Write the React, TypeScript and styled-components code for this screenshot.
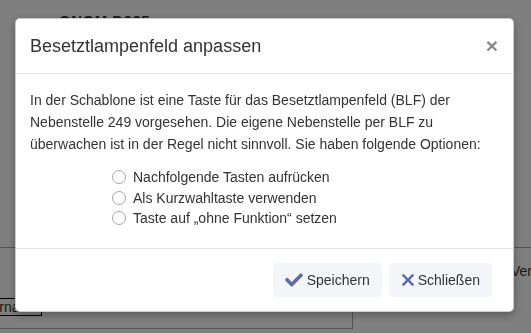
import React from "react";
import styled, { createGlobalStyle } from "styled-components";
import { FaCheck } from "react-icons/fa";

const GlobalStyle = createGlobalStyle`
  html, body { margin: 0; padding: 0; background: #fff; }
  body {
    font-family: "Liberation Sans", Arial, Helvetica, sans-serif;
    font-size: 14px;
    color: #333;
    width: 531px;
    height: 333px;
    overflow: hidden;
  }
  * { box-sizing: border-box; }
`;

const Page = styled.div`
  width: 531px;
  height: 333px;
  display: flex;
  flex-direction: column;
`;

const PageHeading = styled.div`
  padding: 12px 0 0 59px;
  height: 248px;
  font-weight: bold;
  font-size: 15px;
  letter-spacing: 0.5px;
  border-bottom: 1px solid #aaa;
`;

const PageLower = styled.div`
  display: flex;
  height: 81px;
`;

const LeftPanel = styled.div`
  width: 353px;
  border-right: 1px solid #aaa;
  border-bottom: 1px solid #aaa;
  padding-top: 50px;
`;

const NameBox = styled.div`
  width: 42px;
  height: 18px;
  border: 1px solid #000;
  border-left: none;
  font-size: 14px;
  line-height: 16px;
  overflow: hidden;
  direction: rtl;
  padding-right: 2px;
`;

const RightPanel = styled.div`
  flex: 1;
  padding: 15px 0 0 158px;
  white-space: nowrap;
  overflow: hidden;
`;

const Backdrop = styled.div`
  position: fixed;
  inset: 0;
  background: rgba(0, 0, 0, 0.5);
`;

const Modal = styled.div`
  position: fixed;
  left: 15px;
  top: 18px;
  width: 499px;
  background: #fff;
  border: 1px solid rgba(0, 0, 0, 0.2);
  border-radius: 5px;
  box-shadow: 0 3px 9px rgba(0, 0, 0, 0.3);
  display: flex;
  flex-direction: column;
`;

const Header = styled.div`
  display: flex;
  align-items: center;
  justify-content: space-between;
  padding: 14px 15px 14px 14px;
  height: 55px;
  border-bottom: 1px solid #e5e5e5;
`;

const Title = styled.h4`
  margin: 0;
  font-size: 18px;
  font-weight: normal;
  line-height: 26px;
  color: #333;
`;

const Close = styled.button`
  border: none;
  background: none;
  padding: 0;
  font-family: "Liberation Sans", Arial, sans-serif;
  font-size: 21px;
  font-weight: bold;
  line-height: 1;
  color: #8a8a8a;
  cursor: pointer;
  margin-top: -2px;
`;

const Body = styled.div`
  padding: 15px 14px 19.5px 14px;
  border-bottom: 1px solid #e5e5e5;
`;

const Text = styled.p`
  margin: 0 0 12px 0;
  line-height: 22px;
`;

const OptionList = styled.div`
  display: flex;
  flex-direction: column;
  padding-left: 82px;
`;

const OptionRow = styled.label`
  display: flex;
  align-items: center;
  height: 20.6px;
  gap: 7px;
`;

const RadioCircle = styled.span`
  width: 14px;
  height: 14px;
  border-radius: 50%;
  border: 1px solid #a8a8a8;
  background: #fff;
  flex: none;
`;

const Footer = styled.div`
  display: flex;
  justify-content: flex-end;
  gap: 7px;
  padding: 14px 21px 14px 15px;
`;

const Button = styled.button<{ $gap: number }>`
  display: flex;
  align-items: center;
  gap: ${(p) => p.$gap}px;
  height: 34px;
  padding: 0 12px 0 12px;
  border: none;
  border-radius: 4px;
  background: #f4f5f8;
  font-family: "Liberation Sans", Arial, sans-serif;
  font-size: 14px;
  color: #333;
  svg { color: #5e6ea1; flex: none; }
`;

const TimesIcon = () => (
  <svg width="14" height="14" viewBox="0 0 14 14" aria-hidden="true">
    <path
      d="M2.6 0.8 L7 5.2 L11.4 0.8 L13.2 2.6 L8.8 7 L13.2 11.4 L11.4 13.2 L7 8.8 L2.6 13.2 L0.8 11.4 L5.2 7 L0.8 2.6 Z"
      fill="currentColor"
    />
  </svg>
);

const options = [
  "Nachfolgende Tasten aufrücken",
  "Als Kurzwahltaste verwenden",
  "Taste auf \u201eohne Funktion\u201c setzen",
];

export default function App() {
  return (
    <>
      <GlobalStyle />
      <Page>
        <PageHeading>GNOM D935</PageHeading>
        <PageLower>
          <LeftPanel>
            <NameBox>Vorname</NameBox>
          </LeftPanel>
          <RightPanel>Verwendung</RightPanel>
        </PageLower>
      </Page>
      <Backdrop />
      <Modal>
        <Header>
          <Title>Besetztlampenfeld anpassen</Title>
          <Close aria-label="Schließen">×</Close>
        </Header>
        <Body>
          <Text>
            In der Schablone ist eine Taste für das Besetztlampenfeld (BLF) der
            Nebenstelle 249 vorgesehen. Die eigene Nebenstelle per BLF zu
            überwachen ist in der Regel nicht sinnvoll. Sie haben folgende
            Optionen:
          </Text>
          <OptionList>
            {options.map((o) => (
              <OptionRow key={o}>
                <RadioCircle />
                {o}
              </OptionRow>
            ))}
          </OptionList>
        </Body>
        <Footer>
          <Button $gap={4}>
            <FaCheck size={18} />
            Speichern
          </Button>
          <Button $gap={3}>
            <TimesIcon />
            Schließen
          </Button>
        </Footer>
      </Modal>
    </>
  );
}
